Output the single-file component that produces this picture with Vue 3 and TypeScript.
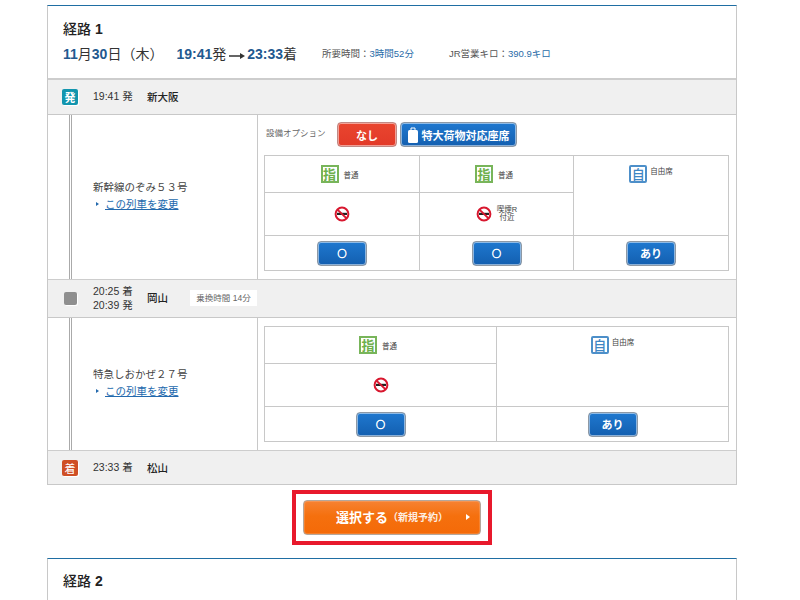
<script setup lang="ts">
interface Seat { icon: 'shi' | 'ji'; label: string; smoke: boolean; note?: boolean; btn: string }
const seg1: Seat[] = [
  { icon: 'shi', label: '普通', smoke: true, btn: '○' },
  { icon: 'shi', label: '普通', smoke: true, note: true, btn: '○' },
  { icon: 'ji', label: '自由席', smoke: false, btn: 'あり' },
]
const seg2: Seat[] = [
  { icon: 'shi', label: '普通', smoke: true, btn: '○' },
  { icon: 'ji', label: '自由席', smoke: false, btn: 'あり' },
]
</script>

<template>
  <main class="page">
    <section class="card">
      <header class="head">
        <h2 class="title">経路 <b>1</b></h2>
        <div class="summary">
          <span class="big"><b>11</b>月<b>30</b>日（木）</span>
          <span class="big times"><b>19:41</b>発<svg class="arrow" width="16" height="6" viewBox="0 0 16 6"><path d="M0 2.2h11V0l5 3-5 3V3.8H0z" fill="#333" /></svg><b>23:33</b>着</span>
          <span class="meta first">所要時間：<em>3時間52分</em></span>
          <span class="meta">JR営業キロ：<em>390.9キロ</em></span>
        </div>
      </header>

      <div class="station">
        <span class="badge dep">発</span>
        <span class="time">19:41 発</span>
        <span class="name">新大阪</span>
      </div>

      <div class="train first-train">
        <div class="rail"></div>
        <div class="train-info">
          <p class="train-name">新幹線のぞみ５３号</p>
          <a class="change"><i class="tri"></i><u>この列車を変更</u></a>
        </div>
        <div class="seats">
          <div class="options">
            <span class="opt-label">設備オプション</span>
            <button class="btn red">なし</button>
            <button class="btn blue wide">
              <svg width="10" height="16" viewBox="0 0 10 16"><path d="M3 3V1h4v2" fill="none" stroke="#fff" /><rect y="3" width="10" height="13" rx="1.5" fill="#fff" /></svg>
              特大荷物対応座席
            </button>
          </div>
          <div class="grid three">
            <template v-for="(s, i) in seg1" :key="i">
              <div class="cell type" :class="{ spanned: !s.smoke }" :style="{ gridColumn: i + 1 }">
                <span class="ico" :class="s.icon">{{ s.icon === 'shi' ? '指' : '自' }}</span>
                <span class="tiny">{{ s.label }}</span>
              </div>
              <div v-if="s.smoke" class="cell smoke" :style="{ gridColumn: i + 1 }">
                <svg width="16" height="16" viewBox="0 0 16 16"><circle cx="8" cy="8" r="6.4" fill="#fff" stroke="#d8182f" stroke-width="2" /><rect x="3" y="6.8" width="10" height="2.2" fill="#222" /><path d="M3.2 3.4l9.6 9.2" stroke="#d8182f" stroke-width="2" /></svg>
                <span v-if="s.note" class="tiny note">喫煙R<br />付近</span>
              </div>
              <div class="cell action" :style="{ gridColumn: i + 1 }">
                <button class="btn blue pick" :class="{ ring: s.btn === '○' }">{{ s.btn }}</button>
              </div>
            </template>
          </div>
        </div>
      </div>

      <div class="station mid">
        <span class="badge stop"></span>
        <span class="time">20:25 着<br />20:39 発</span>
        <span class="name">岡山</span>
        <span class="transfer">乗換時間 14分</span>
      </div>

      <div class="train second-train">
        <div class="rail"></div>
        <div class="train-info">
          <p class="train-name">特急しおかぜ２７号</p>
          <a class="change"><i class="tri"></i><u>この列車を変更</u></a>
        </div>
        <div class="seats">
          <div class="grid two-col">
            <template v-for="(s, i) in seg2" :key="i">
              <div class="cell type" :class="{ spanned: !s.smoke }" :style="{ gridColumn: i + 1 }">
                <span class="ico" :class="s.icon">{{ s.icon === 'shi' ? '指' : '自' }}</span>
                <span class="tiny">{{ s.label }}</span>
              </div>
              <div v-if="s.smoke" class="cell smoke" :style="{ gridColumn: i + 1 }">
                <svg width="16" height="16" viewBox="0 0 16 16"><circle cx="8" cy="8" r="6.4" fill="#fff" stroke="#d8182f" stroke-width="2" /><rect x="3" y="6.8" width="10" height="2.2" fill="#222" /><path d="M3.2 3.4l9.6 9.2" stroke="#d8182f" stroke-width="2" /></svg>
              </div>
              <div class="cell action" :style="{ gridColumn: i + 1 }">
                <button class="btn blue pick" :class="{ ring: s.btn === '○' }">{{ s.btn }}</button>
              </div>
            </template>
          </div>
        </div>
      </div>

      <div class="station last">
        <span class="badge arr">着</span>
        <span class="time">23:33 着</span>
        <span class="name">松山</span>
      </div>
    </section>

    <div class="cta">
      <div class="highlight">
        <button class="select">
          <span class="select-main">選択する</span>
          <span class="select-sub">（新規予約）</span>
          <i class="select-tri"></i>
        </button>
      </div>
    </div>

    <section class="card next">
      <header class="head">
        <h2 class="title">経路 <b>2</b></h2>
      </header>
    </section>
  </main>
</template>

<style scoped>
.page {
  width: 690px;
  height: 595px;
  margin-left: 47px;
  padding-top: 5px;
  overflow: hidden;
  font-family: "Liberation Sans", "Noto Sans CJK JP", sans-serif;
  color: #333;
}
.card {
  box-sizing: border-box;
  border: 1px solid #c8c8c8;
  border-top: 1px solid #1f6ea3;
  background: #fff;
}
.head {
  box-sizing: border-box;
  height: 72px;
  padding: 13px 15px 0;
}
.next .head {
  padding-top: 12px;
}
.title {
  margin: 0;
  font-size: 14px;
  line-height: 20px;
  font-weight: 500;
  color: #222;
}
.title b {
  font-weight: 700;
}
.summary {
  display: flex;
  align-items: center;
  height: 24px;
  margin-top: 3px;
  line-height: 24px;
  white-space: nowrap;
}
.big {
  font-size: 14px;
  color: #333;
}
.big b {
  color: #23598f;
  font-weight: 700;
}
.times {
  margin-left: 13px;
}
.arrow {
  margin: 0 2px 0 3px;
  vertical-align: 0;
}
.meta {
  font-size: 9.5px;
  color: #555;
  margin-left: 35px;
}
.meta.first {
  margin-left: 25px;
}
.meta em {
  font-style: normal;
  color: #2a6ca8;
}
.station {
  box-sizing: border-box;
  display: flex;
  align-items: center;
  height: 37px;
  padding: 0 0 1px 14px;
  background: #f0f0f0;
  border-top: 2px solid #cdcdcd;
  border-bottom: 1px solid #c8c8c8;
  font-size: 10.5px;
  color: #333;
}
.station .time,
.station .name {
  margin-bottom: 1px;
}
.station.mid {
  height: 39px;
  border-top-width: 1px;
}
.station.last {
  height: 34px;
  padding-bottom: 0;
  border-top-width: 1px;
  border-bottom: 0;
}
.badge {
  box-sizing: border-box;
  display: flex;
  align-items: center;
  justify-content: center;
  width: 16px;
  height: 16px;
  margin-right: 15px;
  border-radius: 2px;
  color: #fff;
  font-size: 11px;
  font-weight: 700;
  box-shadow: 1px 1px 0 #fff;
}
.dep { background: #1295ae; }
.arr { background: #cf4f25; font-weight: 400; }
.stop { background: #8f8f8f; width: 13px; height: 13px; margin: 0 16px 0 2px; }
.time {
  width: 54px;
  line-height: 14px;
}
.name {
  font-weight: 500;
  color: #222;
}
.transfer {
  box-sizing: border-box;
  width: 67px;
  height: 16px;
  margin-left: 22px;
  background: #fff;
  font-size: 8.5px;
  line-height: 16px;
  text-align: center;
  color: #666;
}
.train {
  display: grid;
  grid-template-columns: 210px 1fr;
  position: relative;
}
.first-train { height: 164px; }
.second-train { height: 132px; }
.rail {
  position: absolute;
  left: 21px;
  top: 0;
  bottom: 0;
  width: 1px;
  border-left: 1px solid #aaa;
  border-right: 1px solid #aaa;
}
.train-info {
  display: flex;
  flex-direction: column;
  justify-content: center;
  box-sizing: border-box;
  padding-left: 45px;
  padding-bottom: 5px;
  border-right: 1px solid #c8c8c8;
}
.train-name {
  margin: 0;
  font-size: 10.5px;
  line-height: 16px;
  color: #444;
}
.change {
  display: flex;
  align-items: center;
  margin: 2px 0 0 3px;
  font-size: 10.5px;
  line-height: 14px;
  color: #2369ad;
}
.tri {
  width: 0;
  height: 0;
  margin-right: 6px;
  border-left: 3px solid #2369ad;
  border-top: 2.5px solid transparent;
  border-bottom: 2.5px solid transparent;
}
.seats {
  padding: 7px 7px 0 6px;
}
.second-train .seats { padding-top: 8px; }
.options {
  display: flex;
  align-items: flex-start;
  height: 26px;
  margin-bottom: 7px;
}
.opt-label {
  width: 73px;
  padding-left: 2px;
  font-size: 8.5px;
  line-height: 23px;
  color: #666;
  box-sizing: border-box;
}
.btn {
  box-sizing: border-box;
  padding: 0;
  font-family: inherit;
  font-weight: 700;
  color: #fff;
  border-radius: 4px;
  border: 1px solid #8e99a5;
  box-shadow: inset 0 0 0 1px rgba(255, 255, 255, 0.5);
  cursor: pointer;
  display: inline-flex;
  align-items: center;
  justify-content: center;
}
.red {
  width: 60px;
  height: 25px;
  margin-right: 3px;
  border-color: #c08a86;
  background: linear-gradient(#e9452f, #e23a28);
  font-size: 11px;
}
.blue {
  background: linear-gradient(#1f78cf, #135fb0);
}
.wide {
  width: 117px;
  height: 25px;
  gap: 4px;
  font-size: 11px;
}
.pick {
  width: 50px;
  height: 25px;
  font-size: 11px;
}
.ring {
  font-size: 9px;
  font-weight: 700;
  font-family: "Noto Sans CJK JP", sans-serif;
  -webkit-text-stroke: 0.6px #fff;
}
.grid {
  display: grid;
  box-sizing: border-box;
  width: 465px;
  height: 116px;
  border: 1px solid #c8c8c8;
  border-width: 1px 0 0 1px;
  grid-template-rows: 37px 43px 1fr;
}
.three { grid-template-columns: 155px 154px 1fr; }
.two-col { grid-template-columns: 232px 1fr; }
.cell {
  display: flex;
  align-items: center;
  justify-content: center;
  border-right: 1px solid #c8c8c8;
  border-bottom: 1px solid #c8c8c8;
  box-sizing: border-box;
}
.type {
  grid-row: 1;
  gap: 5px;
  padding-right: 5px;
}
.spanned {
  grid-row: 1 / span 2;
  align-items: flex-start;
  gap: 3px;
  padding: 9px 0 0;
}
.smoke {
  grid-row: 2;
  gap: 5px;
}
.action {
  grid-row: 3;
}
.ico {
  box-sizing: border-box;
  display: flex;
  align-items: center;
  justify-content: center;
  width: 18px;
  height: 18px;
  border: 2px solid;
  font-size: 13px;
  line-height: 1;
  font-weight: 700;
}
.shi { color: #6eb04b; border-color: #78b55a; }
.ji { color: #3f86c4; border-color: #4d8fc9; border-radius: 2px; font-weight: 500; }
.tiny {
  font-size: 7.5px;
  color: #444;
}
.note {
  line-height: 8px;
  text-align: center;
}
.cta {
  display: flex;
  justify-content: center;
  height: 73px;
  padding-top: 5px;
  box-sizing: border-box;
}
.highlight {
  box-sizing: border-box;
  width: 200px;
  height: 55px;
  border: 4px solid #e8192c;
  display: flex;
  align-items: center;
  justify-content: center;
}
.select {
  position: relative;
  box-sizing: border-box;
  width: 178px;
  height: 35px;
  padding: 0 0 3px;
  border: 1px solid #b5a79c;
  border-radius: 4px;
  background: linear-gradient(#f68232, #f5700e 45%, #f46a08);
  box-shadow: inset 0 0 0 1px rgba(255, 255, 255, 0.15);
  color: #fff;
  font-family: inherit;
  font-weight: 700;
  display: flex;
  align-items: center;
  justify-content: center;
}
.select-main { font-size: 13px; }
.select-sub { font-size: 10px; color: #fdeee3; }
.select-tri {
  position: absolute;
  right: 10px;
  top: 13px;
  width: 0;
  height: 0;
  border-left: 4px solid #fff;
  border-top: 3px solid transparent;
  border-bottom: 3px solid transparent;
}
.next {
  border-bottom: 0;
}
</style>
